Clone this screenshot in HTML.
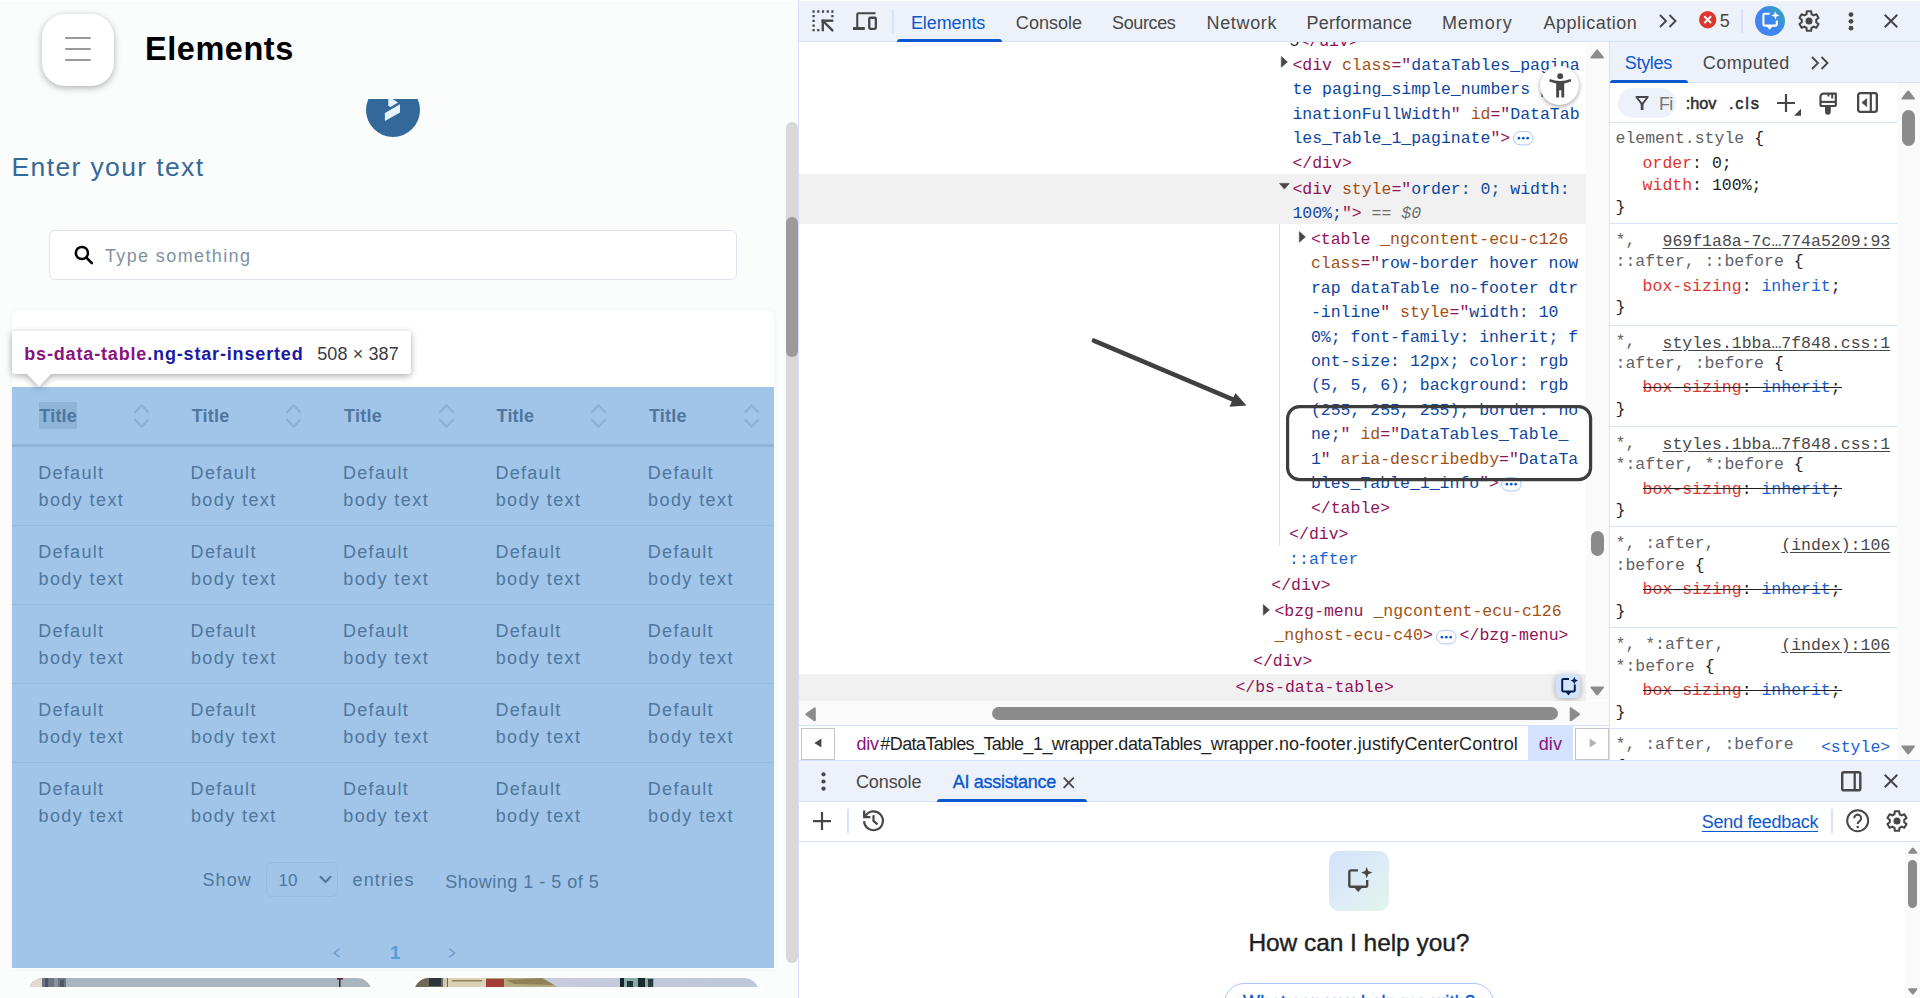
<!DOCTYPE html>
<html lang="en">
<head>
<meta charset="utf-8">
<title>Elements</title>
<style>
html,body{margin:0;padding:0;background:#fff;}
body{width:1920px;height:998px;overflow:hidden;font-family:"Liberation Sans",sans-serif;}
#screen{position:relative;width:1920px;height:998px;overflow:hidden;background:#fff;}
#screen div,#screen span,#screen svg,#screen section,#screen header,#screen nav,#screen ul,#screen li{position:absolute;box-sizing:border-box;margin:0;padding:0;}
#screen svg{overflow:visible;display:block;}
.t{line-height:0;white-space:pre;font-family:"Liberation Sans",sans-serif;}
.t.m{font-family:"Liberation Mono","DejaVu Sans Mono",monospace;}
#page{left:0;top:0;width:798px;height:998px;background:#fbfcfc;overflow:hidden;}
#devtools{left:798px;top:0;width:1122px;height:998px;background:#fff;overflow:hidden;}
#screen .s{position:static;}

</style>
</head>
<body>
<div id="screen">
<section id="page">
<div id="content" style="left:0;top:99px;width:786px;height:899px;overflow:hidden">
<svg style="left:366px;top:-16px" width="54" height="54" viewBox="0 0 54 54" ><circle cx="27" cy="27" r="27" fill="#33699a"/><path d="M18.9 30 L34 21.2 L34 29.6 L18.9 38 Z" fill="#e6f3ff"/><path d="M22.3 12 L24.5 14.5 L32 19.6 L24.5 24 L22.3 23 Z" fill="#e6f3ff"/></svg>
</div>
<span class="t" style="left:11.53px;top:167px;font-size:26.5px;color:#35699a;letter-spacing:1.375px;">Enter your text</span>
<div class="search" style="left:49px;top:230px;width:688px;height:50px;background:#fff;border:1px solid #dfe4ea;border-radius:6px;"></div>
<svg style="left:74px;top:244.5px" width="20" height="20" viewBox="0 0 20 20" ><circle cx="7.9" cy="8" r="6.05" fill="none" stroke="#000" stroke-width="2.5"/><path d="M12.4 12.6 L17.8 18.1" stroke="#000" stroke-width="2.6" stroke-linecap="round"/></svg>
<span class="t" style="left:104.92px;top:256px;font-size:18px;color:#8191a1;letter-spacing:1.386px;">Type something</span>
<div class="card" style="left:12px;top:309.5px;width:762px;height:659px;background:#fff;border-radius:8px 8px 0 0;box-shadow:0 0 6px rgba(0,0,0,.04);"></div>
<div class="bs-data-table" style="left:12px;top:387px;width:762px;height:580.5px;background:#a0c5e8;"></div>
<div style="left:39px;top:402px;width:38px;height:26.5px;background:#8eb4d8;"></div>
<span class="t" style="left:39.3px;top:416px;font-size:18px;color:#4f779e;letter-spacing:0.218px;font-weight:700;">Title</span>
<svg style="left:134.0px;top:403px" width="16" height="26" viewBox="0 0 16 26" ><path d="M1.1 9.2 L7.6 2.4 L14.1 9.2 M1.1 16.8 L7.6 23.6 L14.1 16.8" fill="none" stroke="#8bb3d9" stroke-width="2.4" stroke-linecap="round" stroke-linejoin="round"/></svg>
<span class="t" style="left:191.7px;top:416px;font-size:18px;color:#4f779e;letter-spacing:0.218px;font-weight:700;">Title</span>
<svg style="left:286.4px;top:403px" width="16" height="26" viewBox="0 0 16 26" ><path d="M1.1 9.2 L7.6 2.4 L14.1 9.2 M1.1 16.8 L7.6 23.6 L14.1 16.8" fill="none" stroke="#8bb3d9" stroke-width="2.4" stroke-linecap="round" stroke-linejoin="round"/></svg>
<span class="t" style="left:344.1px;top:416px;font-size:18px;color:#4f779e;letter-spacing:0.218px;font-weight:700;">Title</span>
<svg style="left:438.8px;top:403px" width="16" height="26" viewBox="0 0 16 26" ><path d="M1.1 9.2 L7.6 2.4 L14.1 9.2 M1.1 16.8 L7.6 23.6 L14.1 16.8" fill="none" stroke="#8bb3d9" stroke-width="2.4" stroke-linecap="round" stroke-linejoin="round"/></svg>
<span class="t" style="left:496.5px;top:416px;font-size:18px;color:#4f779e;letter-spacing:0.218px;font-weight:700;">Title</span>
<svg style="left:591.2px;top:403px" width="16" height="26" viewBox="0 0 16 26" ><path d="M1.1 9.2 L7.6 2.4 L14.1 9.2 M1.1 16.8 L7.6 23.6 L14.1 16.8" fill="none" stroke="#8bb3d9" stroke-width="2.4" stroke-linecap="round" stroke-linejoin="round"/></svg>
<span class="t" style="left:648.9px;top:416px;font-size:18px;color:#4f779e;letter-spacing:0.218px;font-weight:700;">Title</span>
<svg style="left:743.6px;top:403px" width="16" height="26" viewBox="0 0 16 26" ><path d="M1.1 9.2 L7.6 2.4 L14.1 9.2 M1.1 16.8 L7.6 23.6 L14.1 16.8" fill="none" stroke="#8bb3d9" stroke-width="2.4" stroke-linecap="round" stroke-linejoin="round"/></svg>
<div style="left:12px;top:444px;width:762px;height:3px;background:#8fb4d8;"></div>
<span class="t" style="left:38.19px;top:473px;font-size:18px;color:#4f769d;letter-spacing:1.302px;">Default</span>
<span class="t" style="left:38.48px;top:500px;font-size:18px;color:#4f769d;letter-spacing:1.415px;">body text</span>
<span class="t" style="left:190.59px;top:473px;font-size:18px;color:#4f769d;letter-spacing:1.302px;">Default</span>
<span class="t" style="left:190.88px;top:500px;font-size:18px;color:#4f769d;letter-spacing:1.415px;">body text</span>
<span class="t" style="left:342.99px;top:473px;font-size:18px;color:#4f769d;letter-spacing:1.302px;">Default</span>
<span class="t" style="left:343.28px;top:500px;font-size:18px;color:#4f769d;letter-spacing:1.415px;">body text</span>
<span class="t" style="left:495.39px;top:473px;font-size:18px;color:#4f769d;letter-spacing:1.302px;">Default</span>
<span class="t" style="left:495.68px;top:500px;font-size:18px;color:#4f769d;letter-spacing:1.415px;">body text</span>
<span class="t" style="left:647.79px;top:473px;font-size:18px;color:#4f769d;letter-spacing:1.302px;">Default</span>
<span class="t" style="left:648.08px;top:500px;font-size:18px;color:#4f769d;letter-spacing:1.415px;">body text</span>
<div style="left:12px;top:525px;width:762px;height:1px;background:#93badf;"></div>
<span class="t" style="left:38.19px;top:552px;font-size:18px;color:#4f769d;letter-spacing:1.302px;">Default</span>
<span class="t" style="left:38.48px;top:579px;font-size:18px;color:#4f769d;letter-spacing:1.415px;">body text</span>
<span class="t" style="left:190.59px;top:552px;font-size:18px;color:#4f769d;letter-spacing:1.302px;">Default</span>
<span class="t" style="left:190.88px;top:579px;font-size:18px;color:#4f769d;letter-spacing:1.415px;">body text</span>
<span class="t" style="left:342.99px;top:552px;font-size:18px;color:#4f769d;letter-spacing:1.302px;">Default</span>
<span class="t" style="left:343.28px;top:579px;font-size:18px;color:#4f769d;letter-spacing:1.415px;">body text</span>
<span class="t" style="left:495.39px;top:552px;font-size:18px;color:#4f769d;letter-spacing:1.302px;">Default</span>
<span class="t" style="left:495.68px;top:579px;font-size:18px;color:#4f769d;letter-spacing:1.415px;">body text</span>
<span class="t" style="left:647.79px;top:552px;font-size:18px;color:#4f769d;letter-spacing:1.302px;">Default</span>
<span class="t" style="left:648.08px;top:579px;font-size:18px;color:#4f769d;letter-spacing:1.415px;">body text</span>
<div style="left:12px;top:604px;width:762px;height:1px;background:#93badf;"></div>
<span class="t" style="left:38.19px;top:631px;font-size:18px;color:#4f769d;letter-spacing:1.302px;">Default</span>
<span class="t" style="left:38.48px;top:658px;font-size:18px;color:#4f769d;letter-spacing:1.415px;">body text</span>
<span class="t" style="left:190.59px;top:631px;font-size:18px;color:#4f769d;letter-spacing:1.302px;">Default</span>
<span class="t" style="left:190.88px;top:658px;font-size:18px;color:#4f769d;letter-spacing:1.415px;">body text</span>
<span class="t" style="left:342.99px;top:631px;font-size:18px;color:#4f769d;letter-spacing:1.302px;">Default</span>
<span class="t" style="left:343.28px;top:658px;font-size:18px;color:#4f769d;letter-spacing:1.415px;">body text</span>
<span class="t" style="left:495.39px;top:631px;font-size:18px;color:#4f769d;letter-spacing:1.302px;">Default</span>
<span class="t" style="left:495.68px;top:658px;font-size:18px;color:#4f769d;letter-spacing:1.415px;">body text</span>
<span class="t" style="left:647.79px;top:631px;font-size:18px;color:#4f769d;letter-spacing:1.302px;">Default</span>
<span class="t" style="left:648.08px;top:658px;font-size:18px;color:#4f769d;letter-spacing:1.415px;">body text</span>
<div style="left:12px;top:683px;width:762px;height:1px;background:#93badf;"></div>
<span class="t" style="left:38.19px;top:710px;font-size:18px;color:#4f769d;letter-spacing:1.302px;">Default</span>
<span class="t" style="left:38.48px;top:737px;font-size:18px;color:#4f769d;letter-spacing:1.415px;">body text</span>
<span class="t" style="left:190.59px;top:710px;font-size:18px;color:#4f769d;letter-spacing:1.302px;">Default</span>
<span class="t" style="left:190.88px;top:737px;font-size:18px;color:#4f769d;letter-spacing:1.415px;">body text</span>
<span class="t" style="left:342.99px;top:710px;font-size:18px;color:#4f769d;letter-spacing:1.302px;">Default</span>
<span class="t" style="left:343.28px;top:737px;font-size:18px;color:#4f769d;letter-spacing:1.415px;">body text</span>
<span class="t" style="left:495.39px;top:710px;font-size:18px;color:#4f769d;letter-spacing:1.302px;">Default</span>
<span class="t" style="left:495.68px;top:737px;font-size:18px;color:#4f769d;letter-spacing:1.415px;">body text</span>
<span class="t" style="left:647.79px;top:710px;font-size:18px;color:#4f769d;letter-spacing:1.302px;">Default</span>
<span class="t" style="left:648.08px;top:737px;font-size:18px;color:#4f769d;letter-spacing:1.415px;">body text</span>
<div style="left:12px;top:762px;width:762px;height:1px;background:#93badf;"></div>
<span class="t" style="left:38.19px;top:789px;font-size:18px;color:#4f769d;letter-spacing:1.302px;">Default</span>
<span class="t" style="left:38.48px;top:816px;font-size:18px;color:#4f769d;letter-spacing:1.415px;">body text</span>
<span class="t" style="left:190.59px;top:789px;font-size:18px;color:#4f769d;letter-spacing:1.302px;">Default</span>
<span class="t" style="left:190.88px;top:816px;font-size:18px;color:#4f769d;letter-spacing:1.415px;">body text</span>
<span class="t" style="left:342.99px;top:789px;font-size:18px;color:#4f769d;letter-spacing:1.302px;">Default</span>
<span class="t" style="left:343.28px;top:816px;font-size:18px;color:#4f769d;letter-spacing:1.415px;">body text</span>
<span class="t" style="left:495.39px;top:789px;font-size:18px;color:#4f769d;letter-spacing:1.302px;">Default</span>
<span class="t" style="left:495.68px;top:816px;font-size:18px;color:#4f769d;letter-spacing:1.415px;">body text</span>
<span class="t" style="left:647.79px;top:789px;font-size:18px;color:#4f769d;letter-spacing:1.302px;">Default</span>
<span class="t" style="left:648.08px;top:816px;font-size:18px;color:#4f769d;letter-spacing:1.415px;">body text</span>
<span class="t" style="left:202.44px;top:880px;font-size:18px;color:#4f769d;letter-spacing:1.105px;">Show</span>
<div style="left:266px;top:862px;width:71.5px;height:34.5px;border:1px solid #94bbe1;border-radius:6px;"></div>
<span class="t" style="left:278.44px;top:881px;font-size:17px;color:#4f769d;">10</span>
<svg style="left:318.5px;top:875px" width="13" height="9" viewBox="0 0 13 9" ><path d="M1 1.2 L6.5 7 L12 1.2" fill="none" stroke="#4f779e" stroke-width="2"/></svg>
<span class="t" style="left:352.44px;top:880px;font-size:18px;color:#4f769d;letter-spacing:1.183px;">entries</span>
<span class="t" style="left:445.24px;top:882px;font-size:18px;color:#4f769d;letter-spacing:0.494px;">Showing 1 - 5 of 5</span>
<svg style="left:333.4px;top:947.6px" width="8" height="10" viewBox="0 0 8 10" ><path d="M6.8 0.5 L1.1 4.9 L6.8 9.3" fill="none" stroke="#6c9ccd" stroke-width="1.4"/></svg>
<span class="t" style="left:390.03px;top:953px;font-size:18.7px;color:#5a9ad5;font-weight:700;">1</span>
<svg style="left:448.4px;top:947.6px" width="8" height="10" viewBox="0 0 8 10" ><path d="M1.1 0.5 L6.8 4.9 L1.1 9.3" fill="none" stroke="#6c9ccd" stroke-width="1.4"/></svg>
<div class="img-card-bg" style="left:17px;top:976.8px;width:366px;height:30px;background:#fff;border-radius:27px 27px 0 0;"></div>
<div class="img-card" style="left:28px;top:978px;width:344px;height:30px;border-radius:15px 15px 0 0;background:#a9b5bf;overflow:hidden;"><svg style="left:0;top:0" width="344" height="10" viewBox="0 0 344 10"><rect x="0" y="0" width="14" height="10" fill="#e2dad1"/><rect x="14" y="0" width="24" height="10" fill="#6b7682"/><rect x="17" y="0" width="3" height="10" fill="#4c5662"/><rect x="26" y="0" width="4" height="10" fill="#8b949d"/><rect x="32" y="2" width="4" height="8" fill="#4f5964"/><rect x="311" y="0" width="1.6" height="10" fill="#3d3034"/><rect x="309" y="0" width="6" height="1.6" fill="#5a2f33"/></svg></div>
<div class="img-card-bg" style="left:403px;top:976.8px;width:367px;height:30px;background:#fff;border-radius:27px 27px 0 0;"></div>
<div class="img-card" style="left:414px;top:978px;width:345px;height:30px;border-radius:15px 15px 0 0;background:linear-gradient(90deg,#c8cadd 40%,#bcc7d9 100%);overflow:hidden;"><svg style="left:0;top:0" width="345" height="10" viewBox="0 0 345 10"><path d="M0 0 H129 L145 10 H0 Z" fill="#b5a97f"/><rect x="0" y="0" width="34" height="10" fill="#6d6a5a"/><rect x="15" y="0" width="12" height="8" fill="#2f353f"/><rect x="29" y="0" width="4" height="10" fill="#cfc9b8"/><rect x="34" y="0" width="38" height="10" fill="#d9d0b5"/><rect x="38" y="2" width="30" height="1.5" fill="#8f8360"/><rect x="72" y="1" width="18" height="8" fill="#a23d38"/><path d="M92 2 L128 0 L140 7 L100 6 Z" fill="#8d8258"/><rect x="206" y="0" width="34" height="10" fill="#86aca6"/><rect x="206" y="0" width="4" height="10" fill="#18262a"/><rect x="213" y="3" width="6" height="7" fill="#22343a"/><rect x="224" y="0" width="7" height="10" fill="#1b2a2e"/><rect x="234" y="1" width="5" height="8" fill="#2a3d40"/></svg></div>
<div style="left:0px;top:987px;width:786px;height:11px;background:#fbfcfc;"></div>
<div class="tooltip" style="left:12px;top:331px;width:399px;height:56px;filter:drop-shadow(0 2px 3.5px rgba(0,0,0,.32));"><div style="left:0;top:0;width:399px;height:43px;background:#fff;border-radius:3px"></div><svg style="left:15px;top:42.5px" width="24" height="13" viewBox="0 0 24 13"><path d="M0 0 L24 0 L12 12.6 Z" fill="#fff"/></svg></div>
<span class="t" style="left:24.27px;top:354px;font-size:18px;color:#881280;letter-spacing:0.839px;font-weight:700;"><span class="s" style="color:#881280;">bs-data-table</span><span class="s" style="color:#1a1aa6;">.ng-star-inserted</span></span>
<span class="t" style="left:317.14px;top:354px;font-size:18px;color:#3c3c3c;letter-spacing:0.127px;">508 × 387</span>
<header style="left:0;top:0;width:786px;height:99px;background:#fbfcfc">
<div class="menu-btn" style="left:42px;top:14px;width:72px;height:72px;background:#fff;border-radius:23px;box-shadow:0 2px 7px rgba(0,0,0,.3);"><div style="left:22.6px;top:22.5px;width:26.6px;height:2.2px;border-radius:1px;background:#999"></div><div style="left:22.6px;top:33.7px;width:26.6px;height:2.2px;border-radius:1px;background:#999"></div><div style="left:22.6px;top:44.8px;width:26.6px;height:2.2px;border-radius:1px;background:#999"></div></div>
<span class="t" style="left:144.97px;top:49px;font-size:32.5px;color:#000;letter-spacing:0.549px;font-weight:700;">Elements</span>
</header>
<div style="left:786px;top:122.3px;width:12px;height:840.7px;background:#d8d8d8;border-radius:6px;"></div>
<div style="left:786px;top:217px;width:12px;height:139.5px;background:#9b9b9b;border-radius:6px;"></div>
<div class="top-line" style="left:0px;top:0px;width:798px;height:1px;background:#fff;"></div>
</section>
<section id="devtools">
<div style="left:0px;top:0px;width:1px;height:998px;background:#d3e3fd;"></div>
<nav id="main-toolbar" style="left:1px;top:0;width:1121px;height:42px;background:#edf2fa;border-bottom:1px solid #d3e3fd;border-top:1px solid #fff">
</nav>
<span class="t" style="left:217.86px;top:23px;font-size:18px;color:#474747;letter-spacing:0.022px;">Console</span>
<span class="t" style="left:314.04px;top:23px;font-size:18px;color:#474747;letter-spacing:-0.368px;">Sources</span>
<span class="t" style="left:408.59px;top:23px;font-size:18px;color:#474747;letter-spacing:0.635px;">Network</span>
<span class="t" style="left:508.59px;top:23px;font-size:18px;color:#474747;letter-spacing:0.229px;">Performance</span>
<span class="t" style="left:643.89px;top:23px;font-size:18px;color:#474747;letter-spacing:0.96px;">Memory</span>
<span class="t" style="left:745.5px;top:23px;font-size:18px;color:#474747;letter-spacing:0.525px;">Application</span>
<span class="t" style="left:112.89px;top:23px;font-size:18px;color:#0b57d0;letter-spacing:-0.08px;">Elements</span>
<div style="left:99px;top:39px;width:105px;height:3px;background:#0b57d0;border-radius:3px 3px 0 0;"></div>
<div style="left:94.2px;top:9px;width:1.8px;height:24px;background:#d3e3fd;"></div>
<div style="left:943.2px;top:9px;width:1.8px;height:24px;background:#d3e3fd;"></div>
<svg style="left:14px;top:10px" width="22" height="22" viewBox="0 0 22 22" ><g fill="#474747"><rect x="0.45" y="0.35" width="2.3" height="2.3" rx="0.3"/><rect x="5.15" y="0.35" width="2.3" height="2.3" rx="0.3"/><rect x="9.85" y="0.35" width="2.3" height="2.3" rx="0.3"/><rect x="14.60" y="0.35" width="2.3" height="2.3" rx="0.3"/><rect x="19.25" y="0.35" width="2.3" height="2.3" rx="0.3"/><rect x="0.45" y="5.00" width="2.3" height="2.3" rx="0.3"/><rect x="0.45" y="9.75" width="2.3" height="2.3" rx="0.3"/><rect x="0.45" y="14.40" width="2.3" height="2.3" rx="0.3"/><rect x="0.45" y="19.05" width="2.3" height="2.3" rx="0.3"/><rect x="5.15" y="19.05" width="2.3" height="2.3" rx="0.3"/><rect x="19.25" y="5.00" width="2.3" height="2.3" rx="0.3"/><rect x="9.6" y="9.5" width="11.7" height="2.4"/><rect x="9.6" y="9.5" width="2.35" height="11.75"/></g><path d="M11 11 L20.4 20.4" stroke="#474747" stroke-width="2.4" stroke-linecap="round"/></svg>
<svg style="left:55px;top:12px" width="24" height="18.5" viewBox="0 0 24 18.5" ><path d="M4.25 15.2 V2.5 Q4.25 1.25 5.5 1.25 H22.5" fill="none" stroke="#474747" stroke-width="2.1"/><rect x="0" y="15" width="11.8" height="3" fill="#474747"/><rect x="16.25" y="5.75" width="6.6" height="11.1" rx="1" fill="none" stroke="#474747" stroke-width="2.3"/></svg>
<svg style="left:861px;top:14px" width="18" height="14" viewBox="0 0 18 14" ><path d="M1 1 L7 7 L1 13 M10.5 1 L16.5 7 L10.5 13" fill="none" stroke="#474747" stroke-width="1.9"/></svg>
<svg style="left:901px;top:10.8px" width="17.4" height="17.4" viewBox="0 0 17.4 17.4" ><circle cx="8.7" cy="8.7" r="8.7" fill="#dc362e"/><path d="M5.3 5.3 L12.1 12.1 M12.1 5.3 L5.3 12.1" stroke="#fff" stroke-width="2"/></svg>
<span class="t" style="left:921.64px;top:21px;font-size:18px;color:#4c4640;">5</span>
<svg style="left:957px;top:5.8px" width="30" height="30" viewBox="0 0 30 30" ><defs><linearGradient id="aig" x1="0.1" y1="0.9" x2="1" y2="0.2"><stop offset="0" stop-color="#4285f4"/><stop offset="0.55" stop-color="#3f86ee"/><stop offset="1" stop-color="#30a9b4"/></linearGradient></defs><circle cx="15" cy="15" r="15" fill="url(#aig)"/><path d="M14.6 7.7 H9.6 a1.2 1.2 0 0 0 -1.2 1.2 V18.4 a1.2 1.2 0 0 0 1.2 1.2 H20.6 a1.2 1.2 0 0 0 1.2 -1.2 V14.6" fill="none" stroke="#fff" stroke-width="2.1"/><path d="M11.4 20 H17.8 L14.6 23.7 Z" fill="#fff"/><path d="M20.4 5.2 L21.6 8.2 L24.6 9.4 L21.6 10.6 L20.4 13.6 L19.2 10.6 L16.2 9.4 L19.2 8.2 Z" fill="#fff"/></svg>
<svg style="left:1000px;top:10px" width="22" height="22" viewBox="0 0 22 22" ><path d="M13.50 4.14 L13.16 1.24 L8.84 1.24 L8.50 4.14 A7.30 7.30 0 0 0 6.31 5.41 L3.63 4.24 L1.46 7.99 L3.81 9.73 A7.30 7.30 0 0 0 3.81 12.27 L1.46 14.01 L3.63 17.76 L6.31 16.59 A7.30 7.30 0 0 0 8.50 17.86 L8.84 20.76 L13.16 20.76 L13.50 17.86 A7.30 7.30 0 0 0 15.69 16.59 L18.37 17.76 L20.54 14.01 L18.19 12.27 A7.30 7.30 0 0 0 18.19 9.73 L20.54 7.99 L18.37 4.24 L15.69 5.41 A7.30 7.30 0 0 0 13.50 4.14 Z" fill="none" stroke="#474747" stroke-width="2.1" stroke-linejoin="round"/><circle cx="11" cy="11" r="3.5" fill="#474747"/></svg>
<svg style="left:1050px;top:11.6px" width="6" height="19" viewBox="0 0 6 19" ><circle cx="3" cy="2.6" r="2.4" fill="#474747"/><circle cx="3" cy="9.3" r="2.4" fill="#474747"/><circle cx="3" cy="16.2" r="2.4" fill="#474747"/></svg>
<svg style="left:1086px;top:14px" width="14" height="14" viewBox="0 0 14 14" ><path d="M0.7 0.7 L13.3 13.3 M13.3 0.7 L0.7 13.3" stroke="#474747" stroke-width="2"/></svg>
<div id="elements-tree" style="left:1px;top:42px;width:810px;height:658px;overflow:hidden;background:#fff">
</div>
<div style="left:788px;top:42px;width:23px;height:658px;background:#fafafa;"></div>
<div class="row selected" style="left:1px;top:174px;width:787px;height:50px;background:#f1f1f1;"></div>
<div class="row hovered" style="left:1px;top:674px;width:787px;height:27px;background:#f1f1f1;"></div>
<div style="left:481px;top:224px;width:1px;height:321.5px;background:#d3e3fd;"></div>
<div style="left:1px;top:42px;width:787px;height:20px;overflow:hidden">
<span class="t m " style="left:490.5px;top:0px;font-size:16.5px"><span class="s" style="color:#1f1f1f;">5</span><span class="s" style="color:#911258;">&lt;/div&gt;</span></span>
</div>
<svg style="left:483px;top:56.3px" width="7" height="12" viewBox="0 0 7 12" ><path d="M0.3 0.6 L6.4 5.9 L0.3 11.2 Z" fill="#474747" stroke="#474747" stroke-width="0.6" stroke-linejoin="round"/></svg>
<span class="t m " style="left:494.4px;top:66px;font-size:16.5px"><span class="s" style="color:#911258;">&lt;div</span><span class="s" style="color:#911258;"> </span><span class="s" style="color:#a44f14;">class</span><span class="s" style="color:#911258;">="</span><span class="s" style="color:#0d469f;">dataTables_pagina</span></span>
<span class="t m " style="left:494.4px;top:90px;font-size:16.5px"><span class="s" style="color:#0d469f;">te paging_simple_numbers pag</span></span>
<span class="t m " style="left:494.4px;top:115px;font-size:16.5px"><span class="s" style="color:#0d469f;">inationFullWidth</span><span class="s" style="color:#911258;">"</span><span class="s" style="color:#911258;"> </span><span class="s" style="color:#a44f14;">id</span><span class="s" style="color:#911258;">="</span><span class="s" style="color:#0d469f;">DataTab</span></span>
<span class="t m " style="left:494.4px;top:139px;font-size:16.5px"><span class="s" style="color:#0d469f;">les_Table_1_paginate</span><span class="s" style="color:#911258;">"&gt;</span></span>
<svg style="left:715.1px;top:131.2px" width="20.6" height="14.4" viewBox="0 0 20.6 14.4" ><rect x="0.5" y="0.5" width="19.6" height="13.4" rx="6.7" fill="#fff" stroke="#a8c7fa"/><circle cx="5.9" cy="7.2" r="1.35" fill="#0b57d0"/><circle cx="10.3" cy="7.2" r="1.35" fill="#0b57d0"/><circle cx="14.7" cy="7.2" r="1.35" fill="#0b57d0"/></svg>
<span class="t m " style="left:494.4px;top:164px;font-size:16.5px"><span class="s" style="color:#911258;">&lt;/div&gt;</span></span>
<svg style="left:480.8px;top:182.8px" width="11" height="7" viewBox="0 0 11 7" ><path d="M0.5 0.4 L10.3 0.4 L5.4 6.1 Z" fill="#474747" stroke="#474747" stroke-width="0.6" stroke-linejoin="round"/></svg>
<span class="t m " style="left:494.4px;top:190px;font-size:16.5px"><span class="s" style="color:#911258;">&lt;div</span><span class="s" style="color:#911258;"> </span><span class="s" style="color:#a44f14;">style</span><span class="s" style="color:#911258;">="</span><span class="s" style="color:#0d469f;">order: 0; width:</span></span>
<span class="t m " style="left:494.4px;top:214px;font-size:16.5px"><span class="s" style="color:#0d469f;">100%;</span><span class="s" style="color:#911258;">"&gt;</span><span class="s" style="color:#6e6e6e;font-style:italic"> == </span><span class="s" style="color:#6e6e6e;font-style:italic">$0</span></span>
<svg style="left:501.2px;top:230.6px" width="7" height="12" viewBox="0 0 7 12" ><path d="M0.3 0.6 L6.4 5.9 L0.3 11.2 Z" fill="#474747" stroke="#474747" stroke-width="0.6" stroke-linejoin="round"/></svg>
<span class="t m " style="left:512.9px;top:240px;font-size:16.5px"><span class="s" style="color:#911258;">&lt;table</span><span class="s" style="color:#911258;"> </span><span class="s" style="color:#a44f14;">_ngcontent-ecu-c126</span></span>
<span class="t m " style="left:512.9px;top:264px;font-size:16.5px"><span class="s" style="color:#a44f14;">class</span><span class="s" style="color:#911258;">="</span><span class="s" style="color:#0d469f;">row-border hover now</span></span>
<span class="t m " style="left:512.9px;top:289px;font-size:16.5px"><span class="s" style="color:#0d469f;">rap dataTable no-footer dtr</span></span>
<span class="t m " style="left:512.9px;top:313px;font-size:16.5px"><span class="s" style="color:#0d469f;">-inline</span><span class="s" style="color:#911258;">"</span><span class="s" style="color:#911258;"> </span><span class="s" style="color:#a44f14;">style</span><span class="s" style="color:#911258;">="</span><span class="s" style="color:#0d469f;">width: 10</span></span>
<span class="t m " style="left:512.9px;top:338px;font-size:16.5px"><span class="s" style="color:#0d469f;">0%; font-family: inherit; f</span></span>
<span class="t m " style="left:512.9px;top:362px;font-size:16.5px"><span class="s" style="color:#0d469f;">ont-size: 12px; color: rgb</span></span>
<span class="t m " style="left:512.9px;top:386px;font-size:16.5px"><span class="s" style="color:#0d469f;">(5, 5, 6); background: rgb</span></span>
<span class="t m " style="left:512.9px;top:411px;font-size:16.5px"><span class="s" style="color:#0d469f;">(255, 255, 255); border: no</span></span>
<span class="t m " style="left:512.9px;top:435px;font-size:16.5px"><span class="s" style="color:#0d469f;">ne;</span><span class="s" style="color:#911258;">"</span><span class="s" style="color:#911258;"> </span><span class="s" style="color:#a44f14;">id</span><span class="s" style="color:#911258;">="</span><span class="s" style="color:#0d469f;">DataTables_Table_</span></span>
<span class="t m " style="left:512.9px;top:460px;font-size:16.5px"><span class="s" style="color:#0d469f;">1</span><span class="s" style="color:#911258;">"</span><span class="s" style="color:#911258;"> </span><span class="s" style="color:#a44f14;">aria-describedby</span><span class="s" style="color:#911258;">="</span><span class="s" style="color:#0d469f;">DataTa</span></span>
<span class="t m " style="left:512.9px;top:484px;font-size:16.5px"><span class="s" style="color:#0d469f;">bles_Table_1_info</span><span class="s" style="color:#911258;">"&gt;</span></span>
<svg style="left:702.6px;top:476.7px" width="20.6" height="14.4" viewBox="0 0 20.6 14.4" ><rect x="0.5" y="0.5" width="19.6" height="13.4" rx="6.7" fill="#fff" stroke="#a8c7fa"/><circle cx="5.9" cy="7.2" r="1.35" fill="#0b57d0"/><circle cx="10.3" cy="7.2" r="1.35" fill="#0b57d0"/><circle cx="14.7" cy="7.2" r="1.35" fill="#0b57d0"/></svg>
<span class="t m " style="left:512.9px;top:509px;font-size:16.5px"><span class="s" style="color:#911258;">&lt;/table&gt;</span></span>
<span class="t m " style="left:491.1px;top:535px;font-size:16.5px"><span class="s" style="color:#911258;">&lt;/div&gt;</span></span>
<span class="t m " style="left:491.1px;top:560px;font-size:16.5px"><span class="s" style="color:#1663d6;">::after</span></span>
<span class="t m " style="left:473.3px;top:586px;font-size:16.5px"><span class="s" style="color:#911258;">&lt;/div&gt;</span></span>
<svg style="left:465px;top:604.4px" width="7" height="12" viewBox="0 0 7 12" ><path d="M0.3 0.6 L6.4 5.9 L0.3 11.2 Z" fill="#474747" stroke="#474747" stroke-width="0.6" stroke-linejoin="round"/></svg>
<span class="t m " style="left:476.4px;top:612px;font-size:16.5px"><span class="s" style="color:#911258;">&lt;bzg-menu</span><span class="s" style="color:#911258;"> </span><span class="s" style="color:#a44f14;">_ngcontent-ecu-c126</span></span>
<span class="t m " style="left:476.4px;top:636px;font-size:16.5px"><span class="s" style="color:#a44f14;">_nghost-ecu-c40</span><span class="s" style="color:#911258;">&gt;</span></span>
<svg style="left:638px;top:630.2px" width="20.6" height="14.4" viewBox="0 0 20.6 14.4" ><rect x="0.5" y="0.5" width="19.6" height="13.4" rx="6.7" fill="#fff" stroke="#a8c7fa"/><circle cx="5.9" cy="7.2" r="1.35" fill="#0b57d0"/><circle cx="10.3" cy="7.2" r="1.35" fill="#0b57d0"/><circle cx="14.7" cy="7.2" r="1.35" fill="#0b57d0"/></svg>
<span class="t m " style="left:661.6px;top:636px;font-size:16.5px"><span class="s" style="color:#911258;">&lt;/bzg-menu&gt;</span></span>
<span class="t m " style="left:455.0px;top:662px;font-size:16.5px"><span class="s" style="color:#911258;">&lt;/div&gt;</span></span>
<span class="t m " style="left:437.4px;top:688px;font-size:16.5px"><span class="s" style="color:#911258;">&lt;/bs-data-table&gt;</span></span>
<svg style="left:792.3px;top:48.5px" width="14.4" height="10.5" viewBox="0 0 14.4 10.5" ><path d="M7.2 0.6 Q8 0.6 8.6 1.4 L13.9 8.2 Q14.4 9.6 13 9.6 H1.4 Q0 9.6 0.5 8.2 L5.8 1.4 Q6.4 0.6 7.2 0.6 Z" fill="#8b8b8b"/></svg>
<div style="left:792.9px;top:531px;width:13.2px;height:25px;background:#8b8b8b;border-radius:6.6px;"></div>
<svg style="left:792.3px;top:685.8px" width="14.4" height="10.5" viewBox="0 0 14.4 10.5" ><path d="M7.2 9.4 Q8 9.4 8.6 8.6 L13.9 1.8 Q14.4 0.4 13 0.4 H1.4 Q0 0.4 0.5 1.8 L5.8 8.6 Q6.4 9.4 7.2 9.4 Z" fill="#8b8b8b"/></svg>
<div class="a11y-fab" style="left:741.8px;top:66.3px;width:39.2px;height:39.2px;background:#fff;border-radius:50%;box-shadow:0 1.5px 4px rgba(0,0,0,.38);"><svg style="left:0;top:0" width="39.2" height="39.2" viewBox="0 0 39.2 39.2"><circle cx="20.2" cy="10.2" r="2.9" fill="#474747"/><path d="M9.8 12.9 Q20.2 17 30.6 12.9 L31.3 15.2 Q26 17.2 24.2 17.6 V31.6 H21.4 V24.2 H19.1 V31.6 H16.2 V17.6 Q14.4 17.2 9.1 15.2 Z" fill="#474747"/></svg></div>
<div class="ai-fab" style="left:758px;top:674px;width:24px;height:24px;background:#d3e3fd;border-radius:6px;box-shadow:0 1px 6px rgba(0,0,0,.3);"><svg style="left:0;top:0" width="24" height="24" viewBox="0 0 24 24"><path d="M13 5 H7.4 a1.2 1.2 0 0 0 -1.2 1.2 V16.2 a1.2 1.2 0 0 0 1.2 1.2 H17.6 a1.2 1.2 0 0 0 1.2 -1.2 V10.4" fill="none" stroke="#041e49" stroke-width="2"/><path d="M9.6 17.8 H15.4 L12.5 21.6 Z" fill="#041e49"/><path d="M18.3 2.8 L19.4 5.5 L22.1 6.6 L19.4 7.7 L18.3 10.4 L17.2 7.7 L14.5 6.6 L17.2 5.5 Z" fill="#041e49"/></svg></div>
<svg style="left:0px;top:0px" width="1122" height="998" viewBox="798 0 1122 998" class="annotation"><path d="M1093.8 340.6 L1238 401.6" stroke="#404040" stroke-width="4.4" stroke-linecap="round" fill="none"/><path d="M1246.5 405.4 L1235.4 393 L1229.6 406.8 Z" fill="#404040"/><rect x="1287.6" y="406.7" width="303" height="73" rx="12" fill="none" stroke="#3d3d3d" stroke-width="3.2"/></svg>
<div style="left:1px;top:701px;width:810px;height:24px;background:#fafafa;"></div>
<svg style="left:7px;top:706.5px" width="11.5" height="14.6" viewBox="0 0 11.5 14.6" ><path d="M0.5 7.3 Q0.5 6.6 1.3 6 L9.2 0.4 Q10.8 -0.2 10.8 1.4 V13.2 Q10.8 14.8 9.2 14.2 L1.3 8.6 Q0.5 8 0.5 7.3 Z" fill="#8b8b8b"/></svg>
<div style="left:194px;top:706.8px;width:566px;height:13.2px;background:#8b8b8b;border-radius:6.6px;"></div>
<svg style="left:770.8px;top:706.5px" width="11.5" height="14.6" viewBox="0 0 11.5 14.6" ><path d="M11 7.3 Q11 6.6 10.2 6 L2.3 0.4 Q0.7 -0.2 0.7 1.4 V13.2 Q0.7 14.8 2.3 14.2 L10.2 8.6 Q11 8 11 7.3 Z" fill="#8b8b8b"/></svg>
<div style="left:1px;top:725px;width:810px;height:1px;background:#d3e3fd;"></div>
<div class="crumbs" style="left:1px;top:726px;width:810px;height:34px;background:#fff;"></div>
<div style="left:2.5px;top:727.5px;width:34.5px;height:32px;background:#fff;border:1px solid #c4c4c4;"><svg style="left:12.5px;top:9.5px" width="8" height="10" viewBox="0 0 8 10"><path d="M7.4 0.4 V9.6 L0.4 5 Z" fill="#474747"/></svg></div>
<span class="t" style="left:58.44px;top:744px;font-size:18px;color:#881280;letter-spacing:-0.224px;">div</span>
<span class="t" style="left:82.3px;top:744px;font-size:18px;color:#1f1f1f;letter-spacing:-0.58px;">#DataTables_Table_1_wrapper</span>
<span class="t" style="left:315.79px;top:744px;font-size:18px;color:#1f1f1f;letter-spacing:-0.417px;">.dataTables_wrapper</span>
<span class="t" style="left:475.89px;top:744px;font-size:18px;color:#1f1f1f;letter-spacing:0.117px;">.no-footer</span>
<span class="t" style="left:554.59px;top:744px;font-size:18px;color:#1f1f1f;letter-spacing:0.106px;">.justifyCenterControl</span>
<div style="left:730px;top:726px;width:45px;height:34px;background:#d3e3fd;"></div>
<span class="t" style="left:740.74px;top:744px;font-size:18px;color:#881280;letter-spacing:0.126px;">div</span>
<div style="left:776.5px;top:727.5px;width:34.5px;height:32px;background:#fff;border:1px solid #c4c4c4;"><svg style="left:13.5px;top:9.5px" width="8" height="10" viewBox="0 0 8 10"><path d="M0.6 0.4 V9.6 L7.6 5 Z" fill="#b4b4b4"/></svg></div>
<div style="left:811px;top:42px;width:1px;height:718px;background:#d3e3fd;"></div>
<div class="styles-tabs" style="left:812px;top:42px;width:310px;height:40.5px;background:#edf2fa;border-bottom:1px solid #d3e3fd;"></div>
<span class="t" style="left:826.74px;top:63px;font-size:18px;color:#0b57d0;letter-spacing:-0.298px;">Styles</span>
<span class="t" style="left:904.86px;top:63px;font-size:18px;color:#474747;letter-spacing:0.487px;">Computed</span>
<div style="left:812px;top:80px;width:78px;height:3px;background:#0b57d0;border-radius:3px 3px 0 0;"></div>
<svg style="left:1013px;top:56px" width="18" height="14" viewBox="0 0 18 14" ><path d="M1 1 L7 7 L1 13 M10.5 1 L16.5 7 L10.5 13" fill="none" stroke="#474747" stroke-width="1.9"/></svg>
<div class="filter" style="left:820px;top:88px;width:58px;height:30px;background:#edf2fa;border-radius:15px;"></div>
<svg style="left:837px;top:96px" width="14" height="14.2" viewBox="0 0 14 14.2" ><path d="M1.4 1 H12.8 L7.1 8.4 Z" fill="none" stroke="#474747" stroke-width="1.9" stroke-linejoin="round"/><path d="M7.1 7.6 V14" stroke="#474747" stroke-width="2.7"/></svg>
<span class="t" style="left:860.89px;top:104px;font-size:18px;color:#757575;letter-spacing:-0.701px;">Fi</span>
<span class="t" style="left:887.63px;top:103px;font-size:16.3px;color:#2c2c2c;letter-spacing:0.021px;-webkit-text-stroke:0.5px #2c2c2c;">:hov</span>
<span class="t" style="left:930.93px;top:103px;font-size:16.3px;color:#2c2c2c;letter-spacing:1.811px;-webkit-text-stroke:0.5px #2c2c2c;">.cls</span>
<svg style="left:979px;top:94px" width="24" height="22" viewBox="0 0 24 22" ><path d="M9 0 V18 M0 9 H18" stroke="#474747" stroke-width="2.2"/><path d="M24 14.7 V21.2 a0.6 0.6 0 0 1 -0.6 0.6 H17 Z" fill="#474747"/></svg>
<svg style="left:1021px;top:92px" width="18" height="23" viewBox="0 0 18 23" ><path d="M16.8 1.6 H4.6 A3.1 3.1 0 0 0 1.5 4.7 V13.1 a0.9 0.9 0 0 0 0.9 0.9 H15.9 a0.9 0.9 0 0 0 0.9 -0.9 Z" fill="none" stroke="#474747" stroke-width="2.2" stroke-linejoin="round"/><path d="M1.5 9.9 H16.8" stroke="#474747" stroke-width="2.1"/><path d="M9.4 1.6 V4.4 M13.2 1.6 V6.6" stroke="#474747" stroke-width="2"/><path d="M6 14 H11.8 V19.8 a2.9 2.9 0 0 1 -5.8 0 Z" fill="#474747"/></svg>
<svg style="left:1058.9px;top:92px" width="21" height="21" viewBox="0 0 21 21" ><rect x="1.15" y="1.15" width="18.7" height="18.7" rx="2" fill="none" stroke="#474747" stroke-width="2.3"/><path d="M13.8 1 V20" stroke="#474747" stroke-width="2.2"/><path d="M9.8 6.4 V14.8 L4.8 10.6 Z" fill="#474747" stroke="#474747" stroke-width="0.5" stroke-linejoin="round"/></svg>
<div style="left:812px;top:122px;width:287px;height:1px;background:#d3e3fd;"></div>
<div style="left:1099px;top:83px;width:23px;height:677px;background:#fafafa;"></div>
<svg style="left:1103.3px;top:90px" width="14.4" height="10" viewBox="0 0 14.4 10" ><path d="M7.2 0.6 Q8 0.6 8.6 1.4 L13.9 8.2 Q14.4 9.6 13 9.6 H1.4 Q0 9.6 0.5 8.2 L5.8 1.4 Q6.4 0.6 7.2 0.6 Z" fill="#8b8b8b"/></svg>
<div style="left:1103.8px;top:110px;width:13.2px;height:36px;background:#8b8b8b;border-radius:6.6px;"></div>
<svg style="left:1103.3px;top:744.8px" width="14.4" height="10" viewBox="0 0 14.4 10" ><path d="M7.2 9.4 Q8 9.4 8.6 8.6 L13.9 1.8 Q14.4 0.4 13 0.4 H1.4 Q0 0.4 0.5 1.8 L5.8 8.6 Q6.4 9.4 7.2 9.4 Z" fill="#8b8b8b"/></svg>
<span class="t m " style="left:817.5px;top:139px;font-size:16.5px"><span class="s" style="color:#5f6368;">element.style </span><span class="s" style="color:#1f1f1f;">{</span></span>
<span class="t m " style="left:844.6px;top:164px;font-size:16.5px"><span class="s" style="color:#dc362e;">order</span><span class="s" style="color:#1f1f1f;">: </span><span class="s" style="color:#1f1f1f;">0</span><span class="s" style="color:#1f1f1f;">;</span></span>
<span class="t m " style="left:844.6px;top:186px;font-size:16.5px"><span class="s" style="color:#dc362e;">width</span><span class="s" style="color:#1f1f1f;">: </span><span class="s" style="color:#1f1f1f;">100%</span><span class="s" style="color:#1f1f1f;">;</span></span>
<span class="t m " style="left:817.5px;top:208px;font-size:16.5px"><span class="s" style="color:#1f1f1f;">}</span></span>
<div style="left:812px;top:223px;width:287px;height:1px;background:#d3e3fd;"></div>
<span class="t m " style="left:817.5px;top:241px;font-size:16.5px"><span class="s" style="color:#5f6368;">*,</span></span>
<span class="t m " style="left:864.5px;top:242px;font-size:16.5px"><span class="s" style="color:#474747;text-decoration:underline;text-underline-offset:2px">969f1a8a-7c…774a5209:93</span></span>
<span class="t m " style="left:817.5px;top:262px;font-size:16.5px"><span class="s" style="color:#5f6368;">::after, ::before </span><span class="s" style="color:#1f1f1f;">{</span></span>
<span class="t m " style="left:844.6px;top:287px;font-size:16.5px"><span class="s" style="color:#dc362e;">box-sizing</span><span class="s" style="color:#1f1f1f;">: </span><span class="s" style="color:#1a5fd4;">inherit</span><span class="s" style="color:#1f1f1f;">;</span></span>
<span class="t m " style="left:817.5px;top:308px;font-size:16.5px"><span class="s" style="color:#1f1f1f;">}</span></span>
<div style="left:812px;top:324.5px;width:287px;height:1px;background:#d3e3fd;"></div>
<span class="t m " style="left:817.5px;top:342px;font-size:16.5px"><span class="s" style="color:#5f6368;">*,</span></span>
<span class="t m " style="left:864.5px;top:344px;font-size:16.5px"><span class="s" style="color:#474747;text-decoration:underline;text-underline-offset:2px">styles.1bba…7f848.css:1</span></span>
<span class="t m " style="left:817.5px;top:364px;font-size:16.5px"><span class="s" style="color:#5f6368;">:after, :before </span><span class="s" style="color:#1f1f1f;">{</span></span>
<span class="t m " style="left:844.6px;top:388px;font-size:16.5px"><span class="s" style="color:#dc362e;">box-sizing</span><span class="s" style="color:#1f1f1f;">: </span><span class="s" style="color:#1a5fd4;">inherit</span><span class="s" style="color:#1f1f1f;">;</span></span>
<div style="left:845px;top:386.8px;width:198.5px;height:1.2px;background:#1f1f1f;"></div>
<span class="t m " style="left:817.5px;top:410px;font-size:16.5px"><span class="s" style="color:#1f1f1f;">}</span></span>
<div style="left:812px;top:425.5px;width:287px;height:1px;background:#d3e3fd;"></div>
<span class="t m " style="left:817.5px;top:444px;font-size:16.5px"><span class="s" style="color:#5f6368;">*,</span></span>
<span class="t m " style="left:864.5px;top:445px;font-size:16.5px"><span class="s" style="color:#474747;text-decoration:underline;text-underline-offset:2px">styles.1bba…7f848.css:1</span></span>
<span class="t m " style="left:817.5px;top:465px;font-size:16.5px"><span class="s" style="color:#5f6368;">*:after, *:before </span><span class="s" style="color:#1f1f1f;">{</span></span>
<span class="t m " style="left:844.6px;top:490px;font-size:16.5px"><span class="s" style="color:#dc362e;">box-sizing</span><span class="s" style="color:#1f1f1f;">: </span><span class="s" style="color:#1a5fd4;">inherit</span><span class="s" style="color:#1f1f1f;">;</span></span>
<div style="left:845px;top:487.8px;width:198.5px;height:1.2px;background:#1f1f1f;"></div>
<span class="t m " style="left:817.5px;top:511px;font-size:16.5px"><span class="s" style="color:#1f1f1f;">}</span></span>
<div style="left:812px;top:526.3px;width:287px;height:1px;background:#d3e3fd;"></div>
<span class="t m " style="left:817.5px;top:544px;font-size:16.5px"><span class="s" style="color:#5f6368;">*, :after,</span></span>
<span class="t m " style="left:983.3px;top:546px;font-size:16.5px"><span class="s" style="color:#474747;text-decoration:underline;text-underline-offset:2px">(index):106</span></span>
<span class="t m " style="left:817.5px;top:566px;font-size:16.5px"><span class="s" style="color:#5f6368;">:before </span><span class="s" style="color:#1f1f1f;">{</span></span>
<span class="t m " style="left:844.6px;top:590px;font-size:16.5px"><span class="s" style="color:#dc362e;">box-sizing</span><span class="s" style="color:#1f1f1f;">: </span><span class="s" style="color:#1a5fd4;">inherit</span><span class="s" style="color:#1f1f1f;">;</span></span>
<div style="left:845px;top:588.5999999999999px;width:198.5px;height:1.2px;background:#1f1f1f;"></div>
<span class="t m " style="left:817.5px;top:612px;font-size:16.5px"><span class="s" style="color:#1f1f1f;">}</span></span>
<div style="left:812px;top:627.2px;width:287px;height:1px;background:#d3e3fd;"></div>
<span class="t m " style="left:817.5px;top:645px;font-size:16.5px"><span class="s" style="color:#5f6368;">*, *:after,</span></span>
<span class="t m " style="left:983.3px;top:646px;font-size:16.5px"><span class="s" style="color:#474747;text-decoration:underline;text-underline-offset:2px">(index):106</span></span>
<span class="t m " style="left:817.5px;top:667px;font-size:16.5px"><span class="s" style="color:#5f6368;">*:before </span><span class="s" style="color:#1f1f1f;">{</span></span>
<span class="t m " style="left:844.6px;top:691px;font-size:16.5px"><span class="s" style="color:#dc362e;">box-sizing</span><span class="s" style="color:#1f1f1f;">: </span><span class="s" style="color:#1a5fd4;">inherit</span><span class="s" style="color:#1f1f1f;">;</span></span>
<div style="left:845px;top:689.5px;width:198.5px;height:1.2px;background:#1f1f1f;"></div>
<span class="t m " style="left:817.5px;top:713px;font-size:16.5px"><span class="s" style="color:#1f1f1f;">}</span></span>
<div style="left:812px;top:728.3px;width:287px;height:1px;background:#d3e3fd;"></div>
<span class="t m " style="left:817.5px;top:745px;font-size:16.5px"><span class="s" style="color:#5f6368;">*, :after, :before</span></span>
<span class="t m " style="left:1022.9px;top:748px;font-size:16.5px"><span class="s" style="color:#1a5fd4;">&lt;style&gt;</span></span>
<div style="left:812px;top:755px;width:280px;height:5px;overflow:hidden">
<span class="t m " style="left:5.5px;top:12px;font-size:16.5px"><span class="s" style="color:#1f1f1f;">{</span></span>
</div>
<div class="drawer-tabs" style="left:1px;top:760px;width:1121px;height:42px;background:#edf2fa;border-top:1px solid #d3e3fd;border-bottom:1px solid #d3e3fd;"></div>
<svg style="left:22.5px;top:771.7px" width="5" height="19" viewBox="0 0 5 19" ><circle cx="2.5" cy="2.3" r="2.1" fill="#474747"/><circle cx="2.5" cy="9.5" r="2.1" fill="#474747"/><circle cx="2.5" cy="16.7" r="2.1" fill="#474747"/></svg>
<span class="t" style="left:57.96px;top:782px;font-size:18px;color:#474747;letter-spacing:-0.095px;">Console</span>
<span class="t" style="left:154.7px;top:782px;font-size:18px;color:#0b57d0;letter-spacing:-0.293px;-webkit-text-stroke:0.35px #0b57d0;">AI assistance</span>
<svg style="left:264.7px;top:776.5px" width="11.5" height="11.5" viewBox="0 0 11.5 11.5" ><path d="M0.7 0.7 L10.8 10.8 M10.8 0.7 L0.7 10.8" stroke="#474747" stroke-width="1.8"/></svg>
<div style="left:139px;top:799px;width:150px;height:3px;background:#0b57d0;border-radius:3px 3px 0 0;"></div>
<svg style="left:1042.6px;top:770.6px" width="20.5" height="20.5" viewBox="0 0 20.5 20.5" ><rect x="1.2" y="1.2" width="18.1" height="18.1" rx="1.6" fill="none" stroke="#474747" stroke-width="2.4"/><path d="M13.7 1 V19.5" stroke="#474747" stroke-width="2.3"/></svg>
<svg style="left:1086px;top:774px" width="14" height="14" viewBox="0 0 14 14" ><path d="M0.7 0.7 L13.3 13.3 M13.3 0.7 L0.7 13.3" stroke="#474747" stroke-width="2"/></svg>
<div class="ai-toolbar" style="left:1px;top:802px;width:1121px;height:40px;background:#fff;border-bottom:1px solid #d3e3fd;"></div>
<svg style="left:15px;top:812px" width="18" height="18" viewBox="0 0 18 18" ><path d="M9 0 V18 M0 9.1 H18" stroke="#474747" stroke-width="2.2"/></svg>
<div style="left:49.2px;top:809px;width:1.8px;height:24px;background:#d3e3fd;"></div>
<svg style="left:64.8px;top:810px" width="22" height="22" viewBox="0 0 22 22" ><path d="M2.53 5.82 A9.4 9.4 0 1 1 1.11 11.13" fill="none" stroke="#474747" stroke-width="2.2"/><path d="M1.2 0.4 V7.1 H7.4" fill="none" stroke="#474747" stroke-width="2.3"/><path d="M10.5 5.3 V10.9 L14.5 14.4" fill="none" stroke="#474747" stroke-width="2.2"/></svg>
<span class="t" style="left:903.84px;top:822px;font-size:18px;color:#0b57d0;letter-spacing:-0.293px;text-decoration:underline;text-underline-offset:2.5px;text-decoration-thickness:1.3px;">Send feedback</span>
<div style="left:1033.2px;top:809px;width:1.8px;height:24px;background:#d3e3fd;"></div>
<svg style="left:1048.3px;top:809.3px" width="23.4" height="23.4" viewBox="0 0 23.4 23.4" ><circle cx="11.7" cy="11.7" r="10.5" fill="none" stroke="#474747" stroke-width="2"/><path d="M8.2 9.2 a3.5 3.5 0 1 1 5.4 2.9 q-1.9 1.2 -1.9 3" fill="none" stroke="#474747" stroke-width="2"/><circle cx="11.7" cy="18" r="1.3" fill="#474747"/></svg>
<svg style="left:1088px;top:810px" width="22" height="22" viewBox="0 0 22 22" ><path d="M13.50 4.14 L13.16 1.24 L8.84 1.24 L8.50 4.14 A7.30 7.30 0 0 0 6.31 5.41 L3.63 4.24 L1.46 7.99 L3.81 9.73 A7.30 7.30 0 0 0 3.81 12.27 L1.46 14.01 L3.63 17.76 L6.31 16.59 A7.30 7.30 0 0 0 8.50 17.86 L8.84 20.76 L13.16 20.76 L13.50 17.86 A7.30 7.30 0 0 0 15.69 16.59 L18.37 17.76 L20.54 14.01 L18.19 12.27 A7.30 7.30 0 0 0 18.19 9.73 L20.54 7.99 L18.37 4.24 L15.69 5.41 A7.30 7.30 0 0 0 13.50 4.14 Z" fill="none" stroke="#474747" stroke-width="2.1" stroke-linejoin="round"/><circle cx="11" cy="11" r="3.5" fill="#474747"/></svg>
<div class="ai-tile" style="left:531px;top:850.8px;width:60px;height:60px;border-radius:10px;background:linear-gradient(135deg,#d3e2fb 0%,#dcebf6 50%,#e2f5ec 100%);"><svg style="left:18.2px;top:16.4px" width="26" height="28" viewBox="0 0 25 27"><path d="M10.5 3.2 H3.6 a1.4 1.4 0 0 0 -1.4 1.4 V17.6 a1.4 1.4 0 0 0 1.4 1.4 H18 a1.4 1.4 0 0 0 1.4 -1.4 V12.5" fill="none" stroke="#474747" stroke-width="2.3"/><path d="M6.6 19.6 H15 L10.8 24.2 Z" fill="#474747"/><path d="M19 0 L20.5 3.9 L24.4 5.4 L20.5 6.9 L19 10.8 L17.5 6.9 L13.6 5.4 L17.5 3.9 Z" fill="#474747"/></svg></div>
<span class="t" style="left:450.39px;top:943px;font-size:24.5px;color:#1f1f1f;letter-spacing:-0.054px;-webkit-text-stroke:0.4px #1f1f1f;">How can I help you?</span>
<div class="chip" style="left:426px;top:983px;width:269.5px;height:40px;border:1px solid #a8c7fa;border-radius:20px;background:#fff;"></div>
<span class="t" style="left:445.0px;top:1002px;font-size:18px;color:#0b57d0;letter-spacing:0.233px;-webkit-text-stroke:0.35px #0b57d0;">What can you help me with?</span>
<div style="left:1107px;top:842px;width:15px;height:156px;background:#fafafa;"></div>
<svg style="left:1109.8px;top:846.8px" width="9.6" height="7" viewBox="0 0 9.6 7" ><path d="M4.8 0.4 Q5.4 0.4 5.8 1 L9.3 5.6 Q9.6 6.8 8.6 6.8 H1 Q0 6.8 0.3 5.6 L3.8 1 Q4.2 0.4 4.8 0.4 Z" fill="#8b8b8b"/></svg>
<div style="left:1110px;top:859.8px;width:9px;height:48px;background:#8b8b8b;border-radius:4.5px;"></div>
<svg style="left:1109.8px;top:988.2px" width="9.6" height="7" viewBox="0 0 9.6 7" ><path d="M4.8 6.6 Q5.4 6.6 5.8 6 L9.3 1.4 Q9.6 0.2 8.6 0.2 H1 Q0 0.2 0.3 1.4 L3.8 6 Q4.2 6.6 4.8 6.6 Z" fill="#8b8b8b"/></svg>
</section>
</div>
</body>
</html>
